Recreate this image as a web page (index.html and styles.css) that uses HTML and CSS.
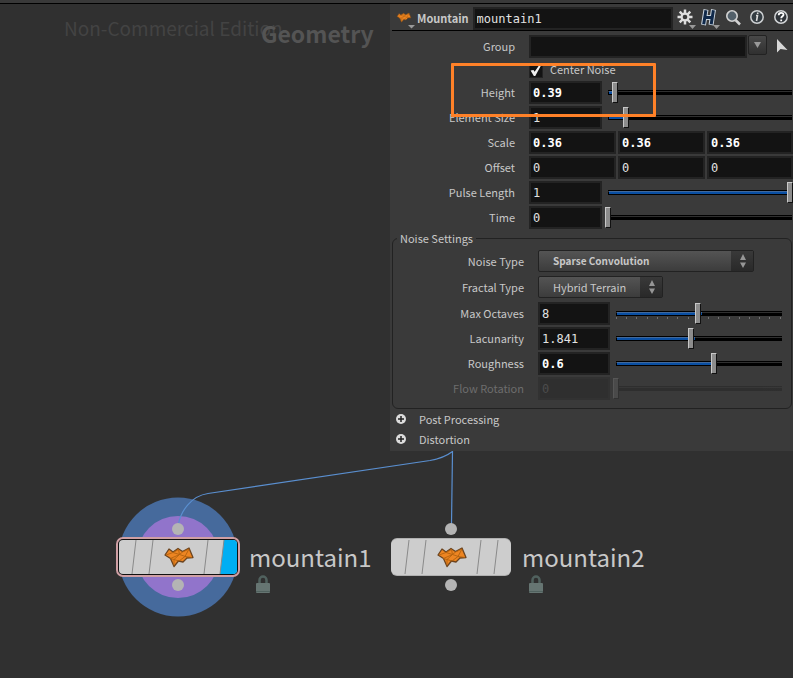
FILE: index.html
```html
<!DOCTYPE html>
<html lang="en">
<head>
<meta charset="utf-8">
<title>Geometry network</title>
<link rel="stylesheet" href="styles.css">
</head>
<body>
<svg class="defs" aria-hidden="true">
  <symbol id="mountain" viewBox="0 0 32 22">
    <path d="M2 9 6 3l4 3L15 2.500 19.500 5.500 26 2l4 9.500-6 .500-4 4-4.500-1L11 20.500 7.500 12.500z" fill="#ed8522" stroke="#6b4420" stroke-width="1.300" stroke-linejoin="round"/>
    <path d="M3 9 10 6.500l5.500-3 1 5L7.500 12.500M10 6.500l6.500 2L19.500 6 26 3l-4 7.500 7 1M16.500 8.500l6 2 1.500 1.500M16.500 8.500 11 13.500l-3.500-1M11 13.500v6M11 13.500l5 1.500 6-4.500" fill="none" stroke="#b3620f" stroke-width=".9"/>
  </symbol>
  <symbol id="plus" viewBox="0 0 10 10">
    <circle cx="5" cy="5" r="5" fill="#dcdcdc"/><path d="M5 2v6M2 5h6" stroke="#222" stroke-width="1.500"/>
  </symbol>
  <symbol id="lock" viewBox="0 0 14 18">
    <path d="M3.500 8V5a3.500 3.500 0 0 1 7 0v3" fill="none" stroke="#50615e" stroke-width="2.500"/><rect y="8" width="14" height="10" rx="1" fill="#667572"/><path d="M0 16.500h14" stroke="#50615e"/>
  </symbol>
  <symbol id="arrows" viewBox="0 0 22 20">
    <path d="M12 3 15 9H9zM12 17l3-5.500H9z" fill="#969696"/>
  </symbol>
</svg>
<main class="workspace">
  <p class="watermark">Non-Commercial Edition</p>
  <h1 class="context">Geometry</h1>

  <svg class="wires" width="793" height="678" aria-hidden="true">
    <circle cx="178" cy="557" r="59.500" fill="#466a9c"/>
    <circle cx="178" cy="557" r="41" fill="#9174cb"/>
    <path d="M178.500 524C181 511 191 496 208 493.500L430 460.500Q444 458 452.500 451.500L451.500 524" fill="none" stroke="#5a8fd0" stroke-width="1.200"/>
  </svg>

  <section class="node node-first">
    <svg width="124" height="68" viewBox="-62 -34 124 68" aria-hidden="true">
      <circle cy="-28" r="6" fill="#b4b4b4"/><circle cy="28" r="6" fill="#b4b4b4"/>
      <rect x="-61" y="-19" width="122" height="38" rx="6" fill="#111" stroke="#cf9fa4" stroke-width="2"/>
      <rect x="-59" y="-17" width="118" height="34" rx="4" fill="#cdcdcd"/>
      <path d="M46-17h9a4 4 0 0 1 4 4v26a4 4 0 0 1-4 4H42z" fill="#00aef3"/>
      <path d="M-42-17l-4 34M-25-17l-4 34M30-17l-4 34M46-17l-4 34" stroke="#8a8a8a"/>
      <use href="#mountain" x="-15" y="-11" width="32" height="22"/>
    </svg>
    <div class="node-text"><h2>mountain1</h2><svg width="14" height="18" aria-hidden="true"><use href="#lock"/></svg></div>
  </section>
  <section class="node node-second">
    <svg width="124" height="68" viewBox="-62 -34 124 68" aria-hidden="true">
      <circle cy="-28" r="6" fill="#b4b4b4"/><circle cy="28" r="6" fill="#b4b4b4"/>
      <rect x="-60" y="-19" width="120" height="38" rx="6" fill="#b0b0b0"/>
      <rect x="-60" y="-18" width="120" height="36" rx="6" fill="#cdcdcd"/>
      <path d="M-42-17l-4 34M-25-17l-4 34M30-17l-4 34M47-17l-4 34" stroke="#8a8a8a"/>
      <use href="#mountain" x="-15" y="-11" width="32" height="22"/>
    </svg>
    <div class="node-text"><h2>mountain2</h2><svg width="14" height="18" aria-hidden="true"><use href="#lock"/></svg></div>
  </section>

  <form class="panel">
    <header class="panel-head">
      <svg class="head-icon" width="20" height="20" viewBox="0 0 20 20" aria-hidden="true"><use href="#mountain" x="0" y="3" width="16" height="11"/><path d="M12 16h7l-3.500 3.500z" fill="#999"/></svg>
      <label class="head-title" for="name">Mountain</label>
      <input class="field name" id="name" value="mountain1">
      <div class="tools">
        <button type="button" aria-label="Settings"><svg width="20" height="22" viewBox="0 0 20 22"><g stroke="#dedede" stroke-width="2.500"><path d="M9 1.500v15M1.500 9h15M3.700 3.700l10.600 10.600M14.300 3.700 3.700 14.300"/></g><circle cx="9" cy="9" r="4.500" fill="#dedede"/><circle cx="9" cy="9" r="2.300" fill="#3a3a3a"/><path d="M13 17h7l-3.500 4z" fill="#999"/></svg></button>
        <button type="button" aria-label="Houdini"><svg width="20" height="22" viewBox="0 0 20 22"><path d="M6 1.500 3.500 17M13.500 1.500 11 17M4 9.500h9" stroke="#c9d3dc" stroke-width="5" fill="none"/><path d="M5.900 2.300 3.700 16.200M13.400 2.300 11.200 16.200M4 9.500h9" stroke="#10294a" stroke-width="3" fill="none"/><path d="M13 17h7l-3.500 4z" fill="#999"/></svg></button>
        <button type="button" aria-label="Search"><svg width="20" height="22" viewBox="0 0 20 22"><circle cx="8" cy="8" r="5.200" fill="#53606a" stroke="#d2d2d2" stroke-width="1.600"/><path d="m11.500 12 4.500 4.500" stroke="#d2d2d2" stroke-width="2.500"/></svg></button>
        <button type="button" aria-label="Info"><svg width="20" height="22" viewBox="0 0 20 22"><circle cx="9" cy="9" r="6.200" fill="#343c42" stroke="#cdd0d2" stroke-width="1.500"/><path d="M8 7.500h1.500L8.500 13M9.700 4.500v1.600" stroke="#dedede" stroke-width="1.600" fill="none"/></svg></button>
        <button type="button" aria-label="Help"><svg width="20" height="22" viewBox="0 0 20 22"><circle cx="9" cy="9" r="6.200" fill="#30353a" stroke="#d2d4d6" stroke-width="1.500"/><path d="M6.700 7.200c0-3 4.800-3 4.800-.400C11.500 8.400 9.200 8.300 9.200 10.300M9.200 11.500v1.800" stroke="#fff" stroke-width="1.800" fill="none"/></svg></button>
      </div>
    </header>

    <div class="rows">
      <div class="row group"><label for="group">Group</label><input class="field" id="group"><button class="drop" type="button" aria-label="Group menu"><svg width="9" height="6"><path d="M1 0h7L4.500 6z" fill="#999"/></svg></button><button class="pick" type="button" aria-label="Select group"><svg width="12" height="16"><path d="M1 1v13.500l3.500-3.500L11.500 12z" fill="#d8d8d8"/></svg></button></div>
      <div class="row check"><span></span><input type="checkbox" id="center" checked><label for="center">Center Noise</label></div>
      <div class="row"><label for="height">Height</label><input class="field changed" id="height" value="0.39"><input class="slider" type="range" aria-label="Height slider" value="4" style="--fill:4%"></div>
      <div class="row"><label for="size">Element Size</label><input class="field" id="size" value="1"><input class="slider" type="range" aria-label="Element size slider" value="10" style="--fill:10%"></div>
      <div class="row triple"><label for="scale">Scale</label><input class="field changed" id="scale" value="0.36"><input class="field changed" aria-label="Scale Y" value="0.36"><input class="field changed" aria-label="Scale Z" value="0.36"></div>
      <div class="row triple"><label for="offset">Offset</label><input class="field" id="offset" value="0"><input class="field" aria-label="Offset Y" value="0"><input class="field" aria-label="Offset Z" value="0"></div>
      <div class="row"><label for="pulse">Pulse Length</label><input class="field" id="pulse" value="1"><input class="slider" type="range" aria-label="Pulse length slider" value="100" style="--fill:97%"></div>
      <div class="row"><label for="time">Time</label><input class="field" id="time" value="0"><input class="slider" type="range" aria-label="Time slider" value="0" style="--fill:0%"></div>
      <div class="highlight"></div>
    </div>

    <fieldset>
      <legend>Noise Settings</legend>
      <div class="row choice"><label for="noise">Noise Type</label><div class="select wide"><select id="noise" class="changed"><option>Sparse Convolution</option></select><svg width="22" height="20" aria-hidden="true"><use href="#arrows"/></svg></div></div>
      <div class="row choice"><label for="fractal">Fractal Type</label><div class="select"><select id="fractal"><option>Hybrid Terrain</option></select><svg width="22" height="20" aria-hidden="true"><use href="#arrows"/></svg></div></div>
      <div class="row"><label for="octaves">Max Octaves</label><input class="field" id="octaves" value="8"><input class="slider ticks" type="range" aria-label="Max octaves slider" value="50" style="--fill:50%"></div>
      <div class="row"><label for="lacunarity">Lacunarity</label><input class="field" id="lacunarity" value="1.841"><input class="slider" type="range" aria-label="Lacunarity slider" value="46" style="--fill:46%"></div>
      <div class="row"><label for="roughness">Roughness</label><input class="field changed" id="roughness" value="0.6"><input class="slider" type="range" aria-label="Roughness slider" value="60" style="--fill:59%"></div>
      <div class="row off"><label for="flow">Flow Rotation</label><input class="field" id="flow" value="0" disabled><input class="slider" type="range" aria-label="Flow rotation slider" value="0" disabled style="--fill:0%"></div>
    </fieldset>

    <div class="folders">
      <button type="button"><svg width="10" height="10"><use href="#plus"/></svg>Post Processing</button>
      <button type="button"><svg width="10" height="10"><use href="#plus"/></svg>Distortion</button>
    </div>
  </form>
</main>
</body>
</html>
```
FILE: styles.css
```css
* { box-sizing: border-box; }
body {
  margin: 0;
  background: #303030;
  color: #c8c8c8;
  font: 11px/20px "Noto Sans CJK SC", "Noto Sans", sans-serif;
}
.defs { position: absolute; width: 0; height: 0; }
h1, h2, p { margin: 0; }
button, input, select { margin: 0; padding: 0; border: 0; background: none; color: inherit; font: inherit; }
svg { display: block; flex: none; }

.workspace {
  position: relative;
  display: flex;
  justify-content: flex-end;
  align-items: flex-start;
  min-height: 100vh;
  overflow: hidden;
  border-top: 3px solid #393939;
}
.workspace::before { content: ""; position: absolute; inset: 0 0 auto; height: 1px; background: #000; }
.wires { position: absolute; left: 0; top: -3px; }
.watermark { position: absolute; left: 64px; top: 9px; color: #434343; font-size: 19px; line-height: 32px; }
.context { position: absolute; left: 261px; top: 14px; color: #545454; font-size: 23px; line-height: 32px; }

.node { position: absolute; top: 520px; display: flex; gap: 9px; }
.node-first { left: 116px; }
.node-second { left: 389px; }
.node-text { padding-top: 16px; }
.node-text h2 { font-size: 24px; line-height: 36px; font-weight: 400; }
.node-text svg { margin-left: 7px; }

.panel {
  width: 403px;
  margin-top: 1px;
  padding-left: 2px;
  background: #3a3a3a;
  z-index: 1;
}
.panel-head { display: flex; height: 27px; align-items: center; border-bottom: 1px solid #000; }
.head-icon { margin: 4px 0 0 4px; }
.head-title { margin: 1px 0 0 1px; font-weight: 700; }
.field {
  min-width: 0;
  height: 23px;
  padding: 0 2px;
  border: 2px solid #232323;
  background: #131313;
  color: #e2e2e2;
  font: 12px/19px "DejaVu Sans Mono", monospace;
}
.field.changed { color: #fff; font-weight: 700; }
.name { flex: 1; margin: 3px 0 0 4px; }
.tools { display: flex; gap: 4px; padding: 3px 1px 0 3px; }

.rows { position: relative; padding-top: 4px; }
.row {
  display: grid;
  grid-template-columns: 137px 73px 1fr;
  height: 25px;
  align-items: start;
}
.row > label { line-height: 22px; }
.row > label:first-child { padding-right: 14px; text-align: right; }
.group { height: 24px; grid-template-columns: 137px 218px 20px 1fr; }
.drop { display: grid; place-items: center; height: 20px; margin-left: 1px; border: 1px solid #222; border-radius: 2px; background: linear-gradient(#484848, #303030); }
.pick { padding: 3px 0 0 9px; }
.check { height: 22px; grid-template-columns: 137px 21px 1fr; }
.check > label { line-height: 20px; }
.check input { appearance: none; width: 14px; height: 14px; margin-top: 5px; border: 1px solid #232323; background: #131313; }
.check input::after { content: ""; display: block; width: 11px; height: 11px; background: #f0f0f0; clip-path: polygon(5% 50%, 32% 45%, 42% 62%, 85% 0, 100% 5%, 48% 100%, 35% 100%); }
.triple { grid-template-columns: 135px 87px 87px 1fr; column-gap: 2px; }
.triple > label:first-child { padding-right: 12px; }
.highlight { position: absolute; left: 59px; top: 32px; width: 205px; height: 54px; border: 3px solid #ff8128; border-radius: 1px; pointer-events: none; }

.slider {
  --fill-layer: linear-gradient(#42699b 0 1px, #0a4fa3 1px 3px) 4px 50% / var(--fill) 3px no-repeat;
  --groove-layer: linear-gradient(#000 0 1px, #303030 1px 2px, #000 2px 5px) 3px 50% / calc(100% - 4px) 5px no-repeat;
  appearance: none;
  width: calc(100% - 3px);
  height: 23px;
  margin-left: 3px;
  background: var(--fill-layer), var(--groove-layer);
}
.slider::-webkit-slider-thumb {
  appearance: none;
  width: 6px;
  height: 21px;
  border: 1px solid;
  border-color: #c8c8c8 #111 #111 #c8c8c8;
  background: #8c8c8c;
}
.ticks {
  background: var(--fill-layer), var(--groove-layer),
    repeating-linear-gradient(90deg, #707070 0 1px, transparent 1px 6.2%) 3px 15px / calc(100% - 5px) 2px no-repeat;
}

fieldset {
  min-width: 0;
  margin: 0 1px 0 0;
  padding: 5px 9px 6px 0;
  border: 1px solid #222;
  border-radius: 6px;
}
legend { margin-left: 4px; padding: 0 3px; line-height: 14px; }
fieldset .row { grid-template-columns: 145px 72px 1fr; }
fieldset .row > label:first-child { padding-right: 14px; }
fieldset .slider { width: calc(100% - 2px); }
fieldset .choice { grid-template-columns: 145px 1fr; height: 26px; }
.select {
  display: flex;
  width: 125px;
  height: 22px;
  border: 1px solid #222;
  border-radius: 2px;
  background: linear-gradient(#545454, #3c3c3c);
}
.select.wide { width: 216px; }
.select select { flex: 1; min-width: 0; appearance: none; padding-left: 14px; line-height: 18px; }
.select svg { background: linear-gradient(#393939, #292929); }
.select select.changed { font-size: 10px; font-weight: 700; }
.off label { color: #6d6d6d; }
.off .field { border-color: #323232; background: #2f2f2f; color: #4c4c4c; }
.off .slider { opacity: .2; }

.folders { padding: 0 0 2px 4px; }
.folders button { display: flex; align-items: center; gap: 13px; height: 20px; }
```
